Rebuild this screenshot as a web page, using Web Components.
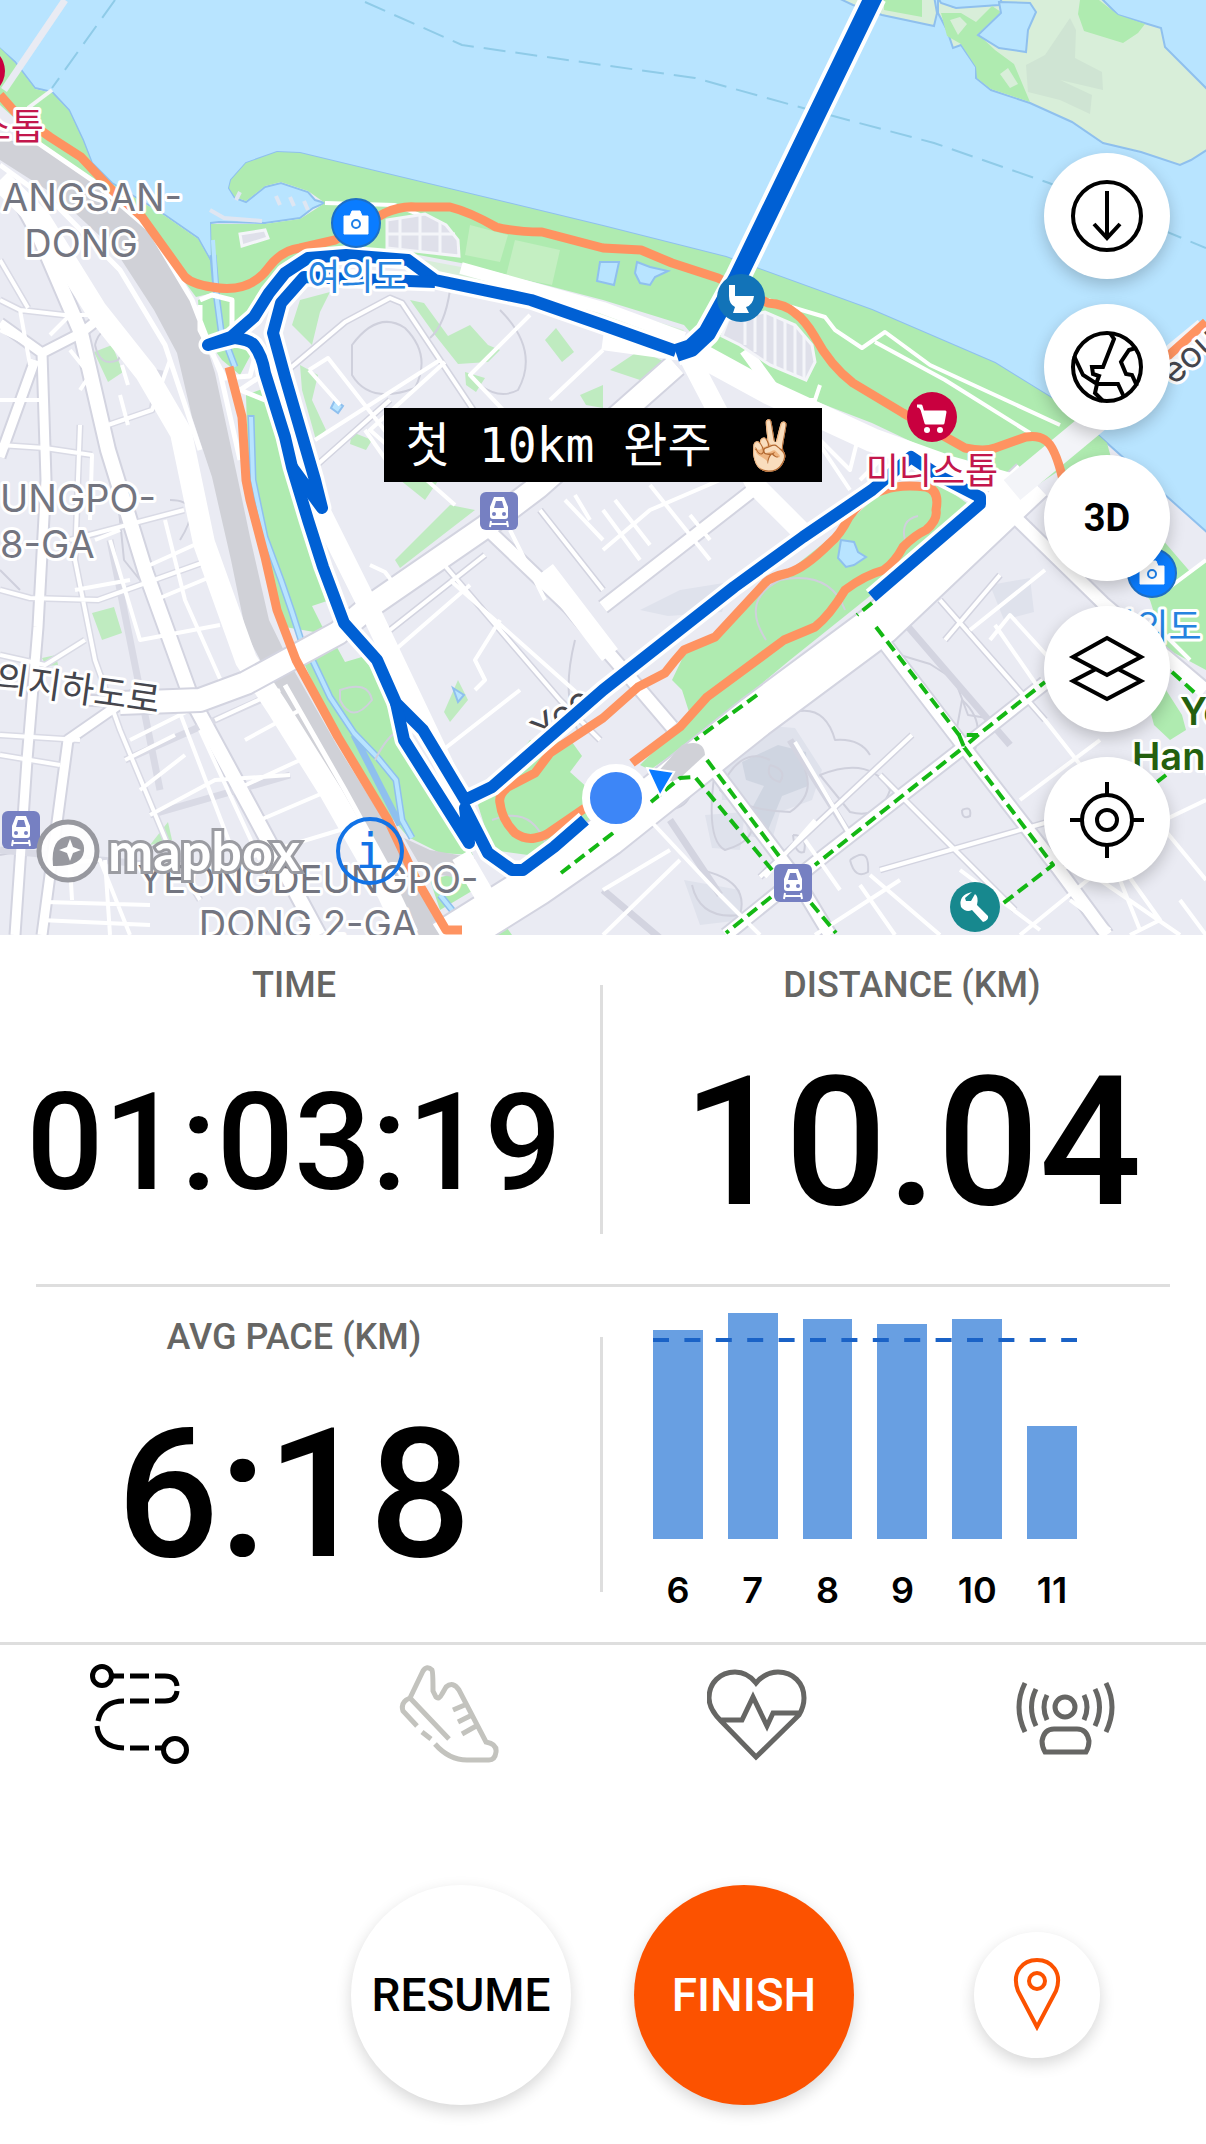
<!DOCTYPE html>
<html lang="en">
<head>
<meta charset="utf-8">
<meta name="viewport" content="width=device-width, initial-scale=1">
<title>Run</title>
<style>
  body {
    background: #ffffff;
    font-family: Roboto, "Noto Sans CJK KR", sans-serif;
    margin: 0;
  }
</style>
</head>
<body>

<run-screen>
  <run-map slot="map">
    <map-control label="Download map">
      <svg viewBox="-40 -40 80 80"><circle r="34"/><path d="M0-25V21M-13 8L0 22L13 8"/></svg>
    </map-control>
    <map-control label="Heatmaps">
      <svg viewBox="-40 -40 80 80"><circle r="34"/><path d="M3-34L7-28L-4 0H-15L-14 7L-8 9L-11 17M-33-11L-24 8L-10 17H11L17 30M-10 17L-12 26L-4 34M29-19L22-17L14-5L19 7L25 8L30 19"/></svg>
    </map-control>
    <map-control label="3D map">3D</map-control>
    <map-control label="Map layers">
      <svg viewBox="-40 -40 80 80"><path d="M0-31L34-12L0 6L-34-12ZM-11 0L-34 12L0 30L34 12L11 0"/></svg>
    </map-control>
    <map-control label="Centre on me">
      <svg viewBox="-40 -40 80 80"><circle r="25"/><circle r="10"/><path d="M0-38V-25M0 25V38M-37 0H-25M25 0H37"/></svg>
    </map-control>
  </run-map>

  <run-stat label="TIME" size="small">01:03:19</run-stat>
  <run-stat label="DISTANCE (KM)">10.04</run-stat>
  <run-stat slot="pace" label="AVG PACE (KM)">6:18</run-stat>
  <pace-chart slot="pace" splits="6:209,7:226,8:220,9:215,10:220,11:113"></pace-chart>

  <run-tabs slot="footer"></run-tabs>
  <run-actions slot="footer"></run-actions>
</run-screen>

<script>
class RunScreen extends HTMLElement {
  constructor() {
    super();

    const template = document.createElement( 'template' )
    template.innerHTML = /* template */ `
      <style>
        :host {
          display: flex;
          flex-direction: column;
        }

        .row {
          column-gap: 30px;
          display: grid;
          grid-template-columns: minmax( 0, 1fr ) minmax( 0, 1fr );
          position: relative;
        }

        .row::after {
          background: #dedede;
          bottom: 50px;
          content: '';
          left: 50%;
          margin-left: -3px;
          position: absolute;
          top: 50px;
          width: 3px;
        }

        hr {
          align-self: stretch;
          background: #dedede;
          border: none;
          height: 3px;
          margin: 0 36px;
        }
      </style>
      <slot name="map"></slot>
      <div class="row"><slot></slot></div>
      <hr>
      <div class="row"><slot name="pace"></slot></div>
      <slot name="footer"></slot>
    `;

    // Root
    this.attachShadow( {mode: 'open'} );
    this.shadowRoot.appendChild( template.content.cloneNode( true ) );
  }
}

class RunMap extends HTMLElement {
  constructor() {
    super();

    const template = document.createElement( 'template' )
    template.innerHTML = /* template */ `
      <style>
        :host {
          display: block;
          overflow: hidden;
          position: relative;
        }

        svg {
          display: block;
          height: auto;
          width: 100%;
        }

        .line {
          fill: none;
          stroke-linecap: butt;
          stroke-linejoin: round;
        }

        .water {
          fill: #b8e4ff;
          stroke: #8fc0ee;
          stroke-width: 2;
        }

        .park {
          fill: #afebb0;
        }

        .meadow {
          fill: #d8eed9;
        }

        .place {
          fill: #737580;
          font-family: Inter, sans-serif;
          font-size: 38px;
        }

        .name {
          font-family: "Noto Sans CJK KR", sans-serif;
          font-size: 36px;
        }

        .road {
          fill: #45464d;
          font-family: Inter, "Noto Sans CJK KR", sans-serif;
          font-size: 36px;
        }

        .halo text {
          paint-order: stroke;
          stroke: #ffffff;
          stroke-linejoin: round;
          stroke-width: 6px;
        }

        #caption {
          background: #000000;
          color: #ffffff;
          font-family: "DejaVu Sans Mono", "Noto Sans CJK KR", "Noto Color Emoji", monospace;
          font-size: 48px;
          left: 0;
          line-height: 74px;
          margin: 0 auto;
          padding: 0 22px;
          position: absolute;
          right: 0;
          top: 408px;
          white-space: pre;
          width: fit-content;
        }

        #controls {
          display: flex;
          flex-direction: column;
          gap: 25px;
          position: absolute;
          right: 36px;
          top: 153px;
        }

        #credit {
          align-items: center;
          bottom: 50px;
          display: flex;
          left: 36px;
          position: absolute;
        }

        #credit svg {
          height: 64px;
          width: 64px;
        }

        #credit a {
          color: #ffffff;
          font-family: Lato, sans-serif;
          font-size: 54px;
          font-weight: 700;
          line-height: 64px;
          margin: 0 36px 0 8px;
          paint-order: stroke;
          text-decoration: none;
          -webkit-text-stroke: 6px #9b9ca2;
        }

        #credit button {
          background: none;
          border: 4px solid #1273e6;
          border-radius: 50%;
          box-sizing: border-box;
          color: #1273e6;
          font-family: "DejaVu Sans Mono", monospace;
          font-size: 48px;
          height: 68px;
          line-height: 56px;
          padding: 0;
          width: 68px;
        }
      </style>
      <svg viewBox="0 0 1206 935" role="img" aria-label="Map of the run">
        <defs>
          <g id="camera">
            <circle r="24" fill="#0a7cff" stroke="#1e6fc4" stroke-width="2"/>
            <path d="M-12-7H-6L-4-12H4L6-7H12V11H-12Z" fill="#fff" stroke="#fff" stroke-linejoin="round"/>
            <circle cy="1" r="4" fill="none" stroke="#1e7fe8" stroke-width="2"/>
          </g>
          <g id="cart">
            <circle r="25" fill="#c9003f"/>
            <path d="M-15-11H-11L-6 6H11L13-5H-9" fill="#fff" stroke="#fff" stroke-width="3" stroke-linejoin="round"/>
            <circle cx="-5" cy="13" r="3" fill="#fff"/><circle cx="8" cy="13" r="3" fill="#fff"/>
          </g>
          <g id="train">
            <rect x="-19" y="-19" width="38" height="38" rx="6" fill="#7680c2"/>
            <path d="M-9 5V-4L-5-14H5L9-4V5Q9 8 6 8H-6Q-9 8-9 5Z" fill="#fff"/>
            <path d="M-5-3L-3-10H3L5-3Z" fill="#7680c2"/>
            <circle cx="-5" cy="3" r="2" fill="#7680c2"/><circle cx="5" cy="3" r="2" fill="#7680c2"/>
            <path d="M-8 10L-9 16M8 10L9 16M-9 13H9" fill="none" stroke="#fff" stroke-width="2"/>
          </g>
        </defs>

        <rect width="1206" height="935" fill="#eaebf3"/>

        <!-- Terrain -->
        <g fill="#dfe2ec">
          <path d="M720 772L760 725L795 728L822 770L812 800L780 812L772 840L748 836L742 800L722 800Z"/>
          <path fill="#cfd5e1" d="M742 762L778 745L806 752L808 786L782 796L768 830L750 812L764 786L746 780Z"/>
          <path d="M705 815L745 812L740 850L712 848ZM684 880L740 890L742 920L700 925ZM640 610L680 590L730 582L722 612L668 616ZM990 585L1030 578L1034 612L1004 620Z"/>
        </g>

        <!-- River -->
        <path class="water" d="M-4-4H1210V535L1107 443L1068 408L995 363L872 310L726 257L603 226L300 153L277 152L246 163L231 180L229 188L235 198L246 202L265 187L281 183L308 192L315 200L325 203L313 208L300 218L265 223L219 222L211 223L212 263L198 238L165 215L112 183L92 163L83 140L69 110L52 92L35 88L15 62L-4 45Z"/>
        <g class="line" stroke="#8fcbe8" stroke-width="2" stroke-dasharray="22 10">
          <path d="M115 0L52 88M365 2L462 45L603 65L695 78L803 108L934 143L1049 183L1206 248"/>
        </g>

        <!-- Island -->
        <g stroke="#8fc0ee" stroke-width="2">
          <path class="meadow" d="M834-4L853 5L882 15L934 26L937 13L934-4ZM938-4L953 7L1003-4H1099L1118 15L1161 28L1165 47L1210 92V148L1191 160L1180 165L1141 152L1103 143L1072 122L1030 103L991 90L976 78L976 67L961 45L953 48L947 30L938 13Z"/>
          <path class="water" d="M937-4L941 3L956 8L999 5L1003-4Z"/>
        </g>
        <path class="park" d="M884-2H922V17L884 10ZM1080 0H1099L1118 15L1145 24L1138 33L1123 43L1084 31L1078 14ZM941 13L961 13L976 22L992 6L1001 12L978 34L995 50L1014 64L1030 102L991 89L977 78L976 67L961 44L947 36Z"/>
        <path class="meadow" d="M950 20L960 17L967 24L958 35ZM1000 74L1008 68L1018 84L1010 88Z"/>
        <path fill="#cfe4d3" d="M1026 65L1045 55L1070 18L1076 30L1075 58L1102 72L1103 90L1060 80L1092 95L1090 114L1060 100L1028 92Z"/>
        <path class="water" d="M999 2L1030 3L1036 12L1028 30L1026 52L999 48L978 35L1001 13Z"/>

        <!-- Parks -->
        <g class="park">
          <path d="M0 48L15 63L35 89L52 93L69 111L83 141L92 164L112 184L165 216L198 239L212 264L217 292L196 297L146 230L92 180L46 147L0 105Z"/>
          <path d="M229 188L231 180L246 163L277 152L300 153L603 226L726 257L872 310L995 363L1068 408L1107 443L1120 490L1180 560L1206 590V655L1150 600L1086 520L1060 470L1030 490L950 460L872 423L768 383L703 347L684 325L603 300L461 263L408 253L331 247L292 260L269 287L246 320L256 345L240 375L222 360L200 330L198 300L216 294L212 262L211 224L265 224L300 219L325 203L308 191L281 182L265 186L246 201L235 197Z"/>
          <path d="M246 395L265 388L280 420L285 460L319 577L330 600L312 606L326 634L285 627L265 547L248 460Z"/>
          <path d="M300 655L333 640L345 662L362 657L374 672L400 727L423 760L473 855L440 853L408 837L385 810L346 753Z"/>
          <path d="M430 880L475 868L482 885L440 910ZM480 935L500 918L512 935Z"/>
          <path d="M478 805L530 740L572 742L582 756L570 772L590 790L604 806L590 838L550 858L492 850Z"/>
          <path d="M640 765L690 715L682 690L672 680L684 655L720 632L765 590L840 530L885 488L940 484L968 504L940 530L870 596L790 660L700 735L650 770Z"/>
          <path d="M1150 600L1206 560V670L1165 648ZM1150 710L1166 690L1182 715L1186 730L1170 740L1154 725Z"/>
        </g>
        <g fill="#bfebc0">
          <path d="M92 613L114 607L122 633L102 640ZM94 352L112 345L123 372L108 382ZM400 480L440 478L425 500ZM395 560L450 505L475 510L400 568ZM545 340L556 328L574 352L562 362ZM300 300L330 292L320 312L312 345L292 325ZM300 365L318 375L312 400L326 430L316 440L302 390ZM352 432L372 440L366 450L350 444ZM410 300L424 303L448 336L470 325L488 345L500 350L488 362L458 364L435 335ZM465 372L485 378L476 392L466 385ZM580 395L603 385V408L586 405ZM150 845L168 822L172 840ZM42 658L56 655L58 665L46 666ZM444 712L458 680L468 700L450 722ZM610 370L640 350L665 362L640 380Z"/>
        </g>
        <path d="M470 225L508 235L500 262L465 255ZM515 240L560 250L552 285L506 276Z" fill="#c4efc2"/>
        <path fill="#d8eed9" d="M330 250L408 257L461 267L603 305L684 330L678 340L603 322L531 298L440 275L330 256Z"/>

        <!-- Ponds and streams -->
        <path class="line" stroke="#8fc0ee" stroke-width="7" d="M213 255L217 300L221 330L235 367M251 415L253 480L265 537L281 580L292 612L301 640M311 657L330 697L354 733L378 758L396 780L402 820L412 838M354 735L400 825M440 895L456 915"/>
        <path class="line" stroke="#b8e4ff" stroke-width="4" d="M213 240L217 300L221 330L235 367M251 417L253 480L265 537L281 580L292 612L301 640M311 657L330 697L354 733L378 758L396 780L402 820L412 838M440 895L456 915"/>
        <path class="water" d="M600 262L619 262L614 285L597 281ZM637 262L650 267L668 271L655 277L650 285L640 283L635 273ZM335 400L343 406L338 413L331 408ZM841 540L854 542L858 552L866 557L854 565L846 567L838 558ZM453 688L464 695L458 702Z"/>

        <!-- Contours -->
        <g class="line" stroke="#cfd0dc" stroke-width="2">
          <path d="M95 345Q100 325 116 332Q128 345 118 360Q100 368 95 345M352 345Q378 310 405 328Q432 355 415 388Q370 405 352 375ZM450 290Q445 325 430 338M500 310Q540 350 518 390Q500 400 480 385M118 500L124 560L140 580M180 540Q205 500 170 500"/>
          <path d="M766 640Q740 600 780 580Q830 570 845 610M900 655L930 664L955 680L968 715L1000 720M905 540Q900 520 918 516M340 700Q352 725 372 700Q368 680 340 690ZM375 760Q400 710 425 740"/>
          <path d="M715 770Q705 840 725 850Q760 840 750 815M770 765Q788 770 780 782Q765 778 770 765M820 775Q870 755 890 790Q880 820 850 812ZM793 835Q808 835 804 852Q795 855 793 835M850 860Q870 845 868 872Q855 880 850 860M962 810Q972 805 970 816Q962 820 962 810M700 870Q750 880 740 915Q700 920 692 885M650 805Q690 820 694 780M600 845Q640 830 630 805M770 760Q740 745 720 790Q740 810 790 812Q815 795 805 770M575 640Q560 700 580 735M492 820Q530 805 545 842"/>
          <path d="M795 712Q825 705 835 740Q860 738 870 755M952 755L962 700Q985 720 975 750M20 200L38 240M0 855Q40 850 34 820M0 570L20 590"/>
        </g>

        <!-- Railway -->
        <path fill="#d0d1d7" d="M0 140L38 143L92 182L150 230L192 300L215 373L238 480L250 537L269 620L292 667L338 747L388 827L446 935H415L362 837L292 727L269 677L246 633L231 560L212 477L192 417L177 353L154 310L115 250L58 197L0 160Z"/>
        <path fill="#d0d1d7" d="M404 838L430 850L475 858L470 880L424 872Z"/>

        <!-- Road edges, then roads -->
        <g class="line" stroke="#d3d4e0">
          <path stroke-width="13" d="M0 323L42 353L81 333L104 315M35 360L0 457M42 353L46 480L38 627L27 760L15 935M154 703L80 700M140 690L68 740L52 860L42 935"/>
          <path stroke-width="18" d="M20 200L38 233L81 333L108 450L146 573L192 700L250 807L319 935"/>
        </g>
        <g class="line" stroke="#d9dae5" stroke-width="7">
          <path d="M0 300L20 310L64 315M28 308L0 260M80 425L75 560L95 660L120 730L170 850L200 900M0 590L30 598L98 600L210 560M0 655L45 665L85 640M0 735L80 740M108 425L152 410L160 370M0 445L45 448L92 455M70 540L184 510M0 755L60 765M110 540L160 790M125 760L260 700M150 815L290 775M0 850L100 860L210 870"/>
        </g>
        <g class="line" stroke="#ffffff" stroke-width="4">
          <path d="M0 300L20 310L64 315L104 315M28 308L0 260M20 310L30 365M80 425L75 560L95 660L120 730L170 850L200 900M0 590L30 598L98 600L210 560M0 655L45 665L85 640M0 735L80 740M108 425L152 410L170 360M0 445L45 448L92 455L90 520M70 540L184 510M0 755L60 765M110 540L140 640L220 625M125 760L175 735M130 740L200 705M140 790L185 755M150 815L215 780L290 775M40 865L100 860L130 935M165 520L185 600L225 690M120 395L128 425M128 385L122 365M20 340L0 330M50 335L70 315L60 290M70 350L90 375L80 390M0 400L40 400M45 902L150 905M40 920L150 925M105 860L110 935M70 865L72 900M150 565L205 540M155 600L215 575M95 540L120 530M245 740L300 710M235 790L300 760M260 820L330 790M175 700L240 870M200 730L260 860M240 860L340 830M215 720L280 690M75 590L130 580"/>
        </g>

        <g class="line" stroke="#ffffff">
          <path stroke-width="9" d="M0 323L42 353L81 333L104 315M35 360L0 457M154 703L80 700M140 690L68 740L52 860L42 935M42 353L46 480L38 627L27 760L15 935"/>
          <path stroke-width="14" d="M20 200L38 233L81 333L108 450L146 573L192 700L250 807L319 935"/>
          <path stroke-width="22" d="M0 180L40 220L96 310L146 373L181 433L204 543L246 660L277 707L331 793L388 893L408 935"/>
          <path stroke-width="5" d="M0 165L58 207L120 270L165 345L200 450M285 685L345 790L400 890M38 143L92 180L150 230L192 300L220 372L240 460M200 300L212 295L232 300L232 330M200 305L200 330L225 378L250 376L258 345M270 370L240 390L265 400"/>
        </g>

        <g class="line" stroke="#d3d4e0">
          <path stroke-width="26" d="M120 703L200 700L246 683L338 633L369 607L485 527L538 487L676 365"/>
          <path stroke-width="46" d="M1032 480L880 624L755 717L711 752L607 835L535 885L444 942"/>
          <path stroke-width="16" d="M603 607L757 487M485 527L569 607L626 673L672 727M707 760L795 877L830 935M872 627L961 743L1057 867L1107 935M1045 683L964 747L815 863L726 935M1018 520L1103 603L1206 690"/>
          <path stroke-width="7" d="M288 370L345 322L390 298L402 303L500 450M300 480L390 400M440 560L560 700L600 740M540 510L603 590M390 630L485 555M1000 575L945 640M940 600L1045 720M885 600L1010 745M790 740L850 835M760 877L912 735M880 775L1015 910M603 890L680 955M670 820L720 895M880 870L1055 820"/>
        </g>

        <g class="line" stroke="#ffffff" stroke-width="4">
          <path d="M288 370L345 322L390 298L402 303L500 450M309 370L328 358L400 450M309 370L340 405M315 440L440 360M445 362L370 430L455 505M530 315L470 375L560 470M550 400L603 350M300 480L390 400M370 565L385 572L400 592M365 430L400 480M450 580L585 700M390 630L485 555M385 630L395 650L470 585M440 560L560 700L600 740M540 510L603 590M565 500L603 540M475 690L485 680L475 660L500 620M430 760L520 690M425 740L450 760L455 800M510 530L545 600M575 495L590 520"/>
          <path d="M603 510L640 560M603 550L650 510L720 480M615 500L650 545M650 485L710 560M690 515L710 540M820 440L850 470L860 430M790 400L850 490M860 480L900 440"/>
          <path d="M940 600L1045 720L1100 790M970 630L1045 570M1000 575L945 640M995 625L1040 690M990 640L1010 615L1060 670M1020 800L1100 740M795 742L850 835M760 877L912 735M765 877L815 820M880 775L1015 910M805 840L840 890M880 870L1055 820M870 875L940 935M815 935L900 880M645 815L720 895L760 935M603 935L680 860M603 890L670 850M960 870L1040 930M1060 870L1206 800M1100 880L1180 935M1140 800L1206 880M1080 780L1140 930M1206 935L1180 900M1020 935L1100 870M895 935L860 885M1070 900L1110 930M1110 850L1160 920L1130 935M1100 600L1206 700"/>
          <path d="M768 300L825 317L835 330L862 348L885 332L930 365L1060 425M875 342L945 380L1030 433M325 203L395 205L420 215M1150 620L1190 660M1166 590L1206 560M820 385L815 400L790 400"/>
        </g>

        <g class="line" stroke="#ffffff">
          <path stroke-width="22" d="M120 703L200 700L246 683L338 633L369 607L485 527L538 487L676 365"/>
          <path stroke-width="42" d="M1032 480L880 624L755 717L711 752L607 835L535 885L444 942"/>
          <path stroke-width="24" d="M603 338L691 350L768 392L872 440L950 468L1010 485"/>
          <path stroke-width="12" d="M461 268L603 308L684 338M603 607L757 487M485 527L569 607L626 673L672 727M707 760L795 877L830 935M872 627L961 743L1057 867L1107 935M1045 683L964 747L815 863L726 935M1018 520L1103 603L1206 690M745 350L780 398"/>
          <path stroke-width="20" d="M688 355L757 487L810 540M545 570L610 655M461 855L490 905M320 510L370 610L470 820"/>
        </g>
        <path fill="#d0d1d7" d="M655 775L682 745Q704 738 705 755L680 778Q666 786 655 775Z"/>
        <path class="line" stroke="#f3f4f8" stroke-width="26" d="M1012 490L1094 422L1206 330"/>
        <path class="line" stroke="#e9ebf3" stroke-width="7" d="M65 0L4 90"/>
        <path class="line" stroke="#f3f4f8" stroke-width="4" d="M52 90L28 108"/>

        <!-- Parking lots and piers -->
        <g fill="#dfe0ea" stroke="#f4f5f9" stroke-width="3">
          <path d="M240 234L265 230L268 238L242 246ZM387 220L425 214L446 225L458 240L459 256L387 248Z"/>
          <path d="M728 320L765 312L795 325L812 345L815 362L806 380L770 365L740 345L722 336Z"/>
          <path d="M400 218V250M420 216V252M440 222V254M387 234H455M745 318V345M755 315V352M765 313V360M775 317V366M785 321V370M795 326V375M804 336V378"/>
        </g>
        <path class="line" stroke="#dfe6f2" stroke-width="4" d="M210 210L224 218L262 221M240 192L236 200M276 196L280 205M290 197L294 206M304 201L308 210"/>

        <!-- Foot and cycle paths -->
        <g class="line" stroke="#fe9361" stroke-width="9">
          <path d="M0 95L15 112L50 137L81 157L112 190L142 217L185 277Q192 284 212 287Q250 294 269 267Q282 250 300 248L335 240L385 213Q400 206 415 207L450 207Q470 212 496 227Q515 232 542 232L603 248L641 250L672 263L718 278L768 303Q785 304 795 313Q805 320 815 337Q830 365 853 383L903 413L965 448Q985 452 995 448L1026 437Q1038 435 1045 440Q1055 446 1063 480M1206 322L1150 372"/>
          <path d="M229 367L242 417L246 480L250 500L265 557L277 610L296 660L338 737L388 820L415 877L446 930L462 930"/>
          <path d="M632 763L680 727L707 697L784 640L815 627Q830 615 845 590Q865 575 884 570Q895 562 903 547Q915 535 926 530Q938 520 936 510Q940 490 926 487Q900 484 884 490Q865 495 849 517Q840 535 830 543Q805 568 788 573Q770 577 765 583L715 637L684 650Q675 660 665 673L638 687L603 718L550 753L535 773L508 787Q498 795 500 803Q502 820 515 833Q525 840 535 838Q545 836 550 832L585 808"/>
        </g>
        <g class="line" stroke="#14b814" stroke-width="4" stroke-dasharray="12 6">
          <path d="M872 603L857 615M876 627L959 735L978 735L1045 682M959 735L964 747L815 865M964 747L1053 865L1001 905M771 897L726 933M811 903L836 933M757 695L695 740M707 760L782 860M651 802L680 778L695 777L772 870M613 833L561 873M1172 672L1195 693M1166 775L1157 782M978 735L964 747"/>
        </g>

        <g class="halo">
          <text class="road" transform="translate( 544 744 ) rotate( -38 )">Yeo</text>
        </g>

        <!-- Route -->
        <g class="line" stroke="#ffffff">
          <path stroke-width="26" d="M874-4L738 277L707 333L691 348L676 353"/>
          <path stroke-width="19" d="M676 351L603 325L531 300L435 280L408 260L346 255L308 258L285 273L269 293L254 317L231 337L208 345L235 338Q250 340 254 345Q262 355 265 373L285 437L292 467L308 520L323 567L344 623L377 660L396 703L423 730L465 800L492 787L603 690L734 587L803 537L872 490L911 457L941 477L980 497L980 504L872 597"/>
          <path stroke-width="19" d="M435 282L408 281L304 277L281 303L273 333L285 377L315 480L322 508L292 467M396 703L404 740L469 843L465 808L488 853L512 870L523 870L554 847L585 820"/>
        </g>
        <g class="line" stroke="#0060d4">
          <path stroke-width="18" d="M874-4L738 277L707 333L691 348L676 353"/>
          <path stroke-width="12" d="M676 351L603 325L531 300L435 280L408 260L346 255L308 258L285 273L269 293L254 317L231 337L208 345L235 338Q250 340 254 345Q262 355 265 373L285 437L292 467L308 520L323 567L344 623L377 660L396 703L423 730L465 800L492 787L603 690L734 587L803 537L872 490L911 457L941 477L980 497L980 504L872 597"/>
          <path stroke-width="12" d="M435 282L408 281L304 277L281 303L273 333L285 377L315 480L322 508L292 467M396 703L404 740L469 843L465 808L488 853L512 870L523 870L554 847L585 820"/>
        </g>

        <!-- Labels -->
        <g class="halo">
          <text class="place" x="182" y="211" text-anchor="end">ANGSAN-</text>
          <text class="place" x="81" y="257" text-anchor="middle">DONG</text>
          <text class="place" x="0" y="512">UNGPO-</text>
          <text class="place" x="0" y="558">8-GA</text>
          <text class="place" x="308" y="893" text-anchor="middle">YEONGDEUNGPO-</text>
          <text class="place" x="308" y="938" text-anchor="middle">DONG 2-GA</text>
          <text class="road" transform="translate( -6 690 ) rotate( 8 )">의지하도로</text>
          <text class="road" transform="translate( 1174 386 ) rotate( -42 )">eou</text>
          <text class="name" x="357" y="290" text-anchor="middle" fill="#2583e0">여의도</text>
          <text class="name" x="1152" y="640" text-anchor="middle" fill="#2583e0">여의도</text>
          <text class="name" x="932" y="484" text-anchor="middle" fill="#c3174c">미니스톱</text>
          <text class="name" x="44" y="140" text-anchor="end" fill="#c3174c">스톱</text>
          <text class="place" x="1180" y="725" style="fill: #24600f; font-weight: 600;">Ye</text>
          <text class="place" x="1132" y="770" style="fill: #24600f; font-weight: 600;">Hang</text>
        </g>

        <!-- Points of interest -->
        <use href="#camera" x="356" y="223"/>
        <use href="#camera" x="1152" y="573"/>
        <use href="#cart" x="932" y="417"/>
        <use href="#cart" x="-20" y="71"/>
        <use href="#train" x="499" y="511"/>
        <use href="#train" x="21" y="830"/>
        <use href="#train" x="793" y="883"/>
        <g transform="translate( 741 298 )">
          <circle r="24" fill="#1273b8"/>
          <path d="M-12-13H-6V-2H13Q12 7 5 9L8 15H-8L-6 9Q-12 6-12-2Z" fill="#fff"/>
        </g>
        <g transform="translate( 975 907 )">
          <circle r="25" fill="#17888e"/>
          <path d="M-3-15Q-17-12-14 0Q-9 6-3 3L8 15Q14 13 13 9L2-2Q4-10 0-13L-4-6H-9L-10-9Z" fill="#fff"/>
        </g>

        <!-- Runner -->
        <path d="M647 768L674 772L660 796Z" fill="#0a7bff" stroke="#ffffff" stroke-width="2"/>
        <circle cx="616" cy="798" r="30" fill="#3d86f7" stroke="#ffffff" stroke-width="8"/>
      </svg>
      <div id="caption">첫 10km 완주 ✌🏻</div>
      <div id="controls"><slot></slot></div>
      <div id="credit">
        <svg viewBox="0 0 64 64" aria-hidden="true">
          <circle cx="32" cy="32" r="29" fill="#ffffff" fill-opacity=".9" stroke="#97989f" stroke-width="5"/>
          <path d="M17 47Q14 18 34 17Q49 18 48 32Q46 48 17 47Z" fill="#97989f"/>
          <path d="M34 20L37 28L45 31L37 34L34 42L31 34L23 31L31 28Z" fill="#ffffff"/>
        </svg>
        <a href="#mapbox">mapbox</a>
        <button type="button" aria-label="Map information">i</button>
      </div>
    `;

    // Root
    this.attachShadow( {mode: 'open'} );
    this.shadowRoot.appendChild( template.content.cloneNode( true ) );
  }
}

class MapControl extends HTMLElement {
  constructor() {
    super();

    const template = document.createElement( 'template' )
    template.innerHTML = /* template */ `
      <style>
        :host {
          display: block;
        }

        button {
          align-items: center;
          background: #ffffff;
          border: none;
          border-radius: 50%;
          box-shadow: 0 6px 16px rgba( 0, 0, 0, 0.20 );
          color: #000000;
          cursor: pointer;
          display: flex;
          font-family: Roboto, sans-serif;
          font-size: 38px;
          font-weight: 700;
          height: 126px;
          justify-content: center;
          padding: 0;
          width: 126px;
        }

        ::slotted( svg ) {
          fill: none;
          height: 80px;
          stroke: #000000;
          stroke-width: 4px;
          width: 80px;
        }
      </style>
      <button type="button"><slot></slot></button>
    `;

    // Root
    this.attachShadow( {mode: 'open'} );
    this.shadowRoot.appendChild( template.content.cloneNode( true ) );

    // Elements
    this.$button = this.shadowRoot.querySelector( 'button' );
  }

  // When things change
  _render() {
    this.$button.setAttribute( 'aria-label', this.label === null ? '' : this.label );
  }

  // Setup
  connectedCallback() {
    this._render();
  }

  // Watched attributes
  static get observedAttributes() {
    return ['label'];
  }

  attributeChangedCallback( name, old, value ) {
    this._render();
  }

  get label() {
    return this.getAttribute( 'label' );
  }
}

class RunStat extends HTMLElement {
  constructor() {
    super();

    const template = document.createElement( 'template' )
    template.innerHTML = /* template */ `
      <style>
        :host {
          align-items: center;
          box-sizing: border-box;
          display: flex;
          flex-direction: column;
          padding: 26px 0 8px 0;
        }

        p {
          color: #666664;
          font-size: 36px;
          font-weight: 500;
          line-height: 48px;
          margin: 0;
        }

        #value {
          color: #000000;
          font-size: 180px;
          line-height: 267px;
        }

        :host( [size=small] ) #value {
          font-size: 136px;
        }
      </style>
      <p id="label"></p>
      <p id="value"><slot></slot></p>
    `;

    // Root
    this.attachShadow( {mode: 'open'} );
    this.shadowRoot.appendChild( template.content.cloneNode( true ) );

    // Elements
    this.$label = this.shadowRoot.querySelector( '#label' );
  }

  // When things change
  _render() {
    this.$label.textContent = this.label === null ? '' : this.label;
  }

  // Setup
  connectedCallback() {
    this._render();
  }

  // Watched attributes
  static get observedAttributes() {
    return ['label', 'size'];
  }

  attributeChangedCallback( name, old, value ) {
    this._render();
  }

  get label() {
    return this.getAttribute( 'label' );
  }
}

class PaceChart extends HTMLElement {
  constructor() {
    super();

    const template = document.createElement( 'template' )
    template.innerHTML = /* template */ `
      <style>
        :host {
          box-sizing: border-box;
          display: block;
          padding: 26px 129px 28px 35px;
        }

        #chart {
          display: grid;
          gap: 25px;
          grid-auto-columns: minmax( 0, 1fr );
          grid-auto-flow: column;
          position: relative;
        }

        #chart div {
          align-items: center;
          display: flex;
          flex-direction: column;
          gap: 27px;
          justify-content: flex-end;
        }

        #chart i {
          align-self: stretch;
          background: #689fe2;
        }

        #chart span {
          color: #000000;
          font-family: Inter, sans-serif;
          font-size: 36px;
          font-weight: 600;
          line-height: 48px;
        }

        /* Average pace */
        svg {
          height: 4px;
          left: 0;
          position: absolute;
          top: 25px;
          width: 100%;
        }
      </style>
      <div id="chart">
        <svg aria-hidden="true"><line x1="0" y1="2" x2="100%" y2="2" stroke="#1a62c6" stroke-width="4" stroke-dasharray="16 15.4"/></svg>
      </div>
    `;

    // Root
    this.attachShadow( {mode: 'open'} );
    this.shadowRoot.appendChild( template.content.cloneNode( true ) );

    // Elements
    this.$chart = this.shadowRoot.querySelector( '#chart' );
    this.$average = this.shadowRoot.querySelector( 'svg' );
  }

  // When things change
  _render() {
    const columns = this.splits.map( ( [km, height] ) => {
      const column = document.createElement( 'div' );
      const bar = document.createElement( 'i' );
      const label = document.createElement( 'span' );
      bar.style.height = `${height}px`;
      label.textContent = km;
      column.append( bar, label );
      return column;
    } );

    this.$chart.replaceChildren( ...columns, this.$average );
  }

  // Setup
  connectedCallback() {
    this._render();
  }

  // Kilometre and bar height pairs
  get splits() {
    if( this.hasAttribute( 'splits' ) ) {
      return this.getAttribute( 'splits' ).split( ',' ).map( ( split ) => split.split( ':' ) );
    }

    return [];
  }
}

class RunTabs extends HTMLElement {
  constructor() {
    super();

    const template = document.createElement( 'template' )
    template.innerHTML = /* template */ `
      <style>
        :host {
          border-top: solid 3px #dedede;
          display: block;
        }

        nav {
          display: flex;
          justify-content: space-between;
          padding: 19px 90px 0 90px;
        }

        button {
          background: none;
          border: none;
          color: #666664;
          cursor: pointer;
          height: 100px;
          padding: 0;
          width: 100px;
        }

        button:nth-of-type( 1 ) {
          color: #000000;
        }

        button:nth-of-type( 2 ) {
          color: #c3c3be;
        }

        svg {
          display: block;
          fill: none;
          height: 100px;
          stroke: currentColor;
          stroke-width: 5px;
          width: 100px;
        }
      </style>
      <nav>
        <button type="button" aria-label="Route">
          <svg viewBox="0 0 100 100"><circle cx="12" cy="12" r="9.5"/><circle cx="85" cy="86" r="11.5"/><path d="M22 12H34M40 12H59M65 12H75Q86 12 87 22M87 27Q86 37 75 37H65M59 37H40M34 37Q12 37 8 57M7 62Q9 83 34 84M40 84H59M65 84H74"/></svg>
        </button>
        <button type="button" aria-label="Shoes">
          <svg viewBox="0 0 100 100"><path d="M11 34L24 7Q28 1 33 6Q34 8 34 27L37 33Q40 36 43 30L47 23Q54 17 60 26L87 78Q98 80 97 88Q96 96 90 96H68Q50 96 36 80M18 62L4 47Q1 38 11 34L50 75M23 68L32 75M68 40L54 46M73 51L59 58M79 61L63 70"/></svg>
        </button>
        <button type="button" aria-label="Heart rate">
          <svg viewBox="0 0 100 100"><path d="M49 19C42 10 35 8 28 8C13 8 2 19 2 34C2 43 7 50 14 57L49 93L92 51C95 46 97 40 97 34C97 19 86 8 71 8C62 8 55 12 49 19ZM14 56H35L46 33L60 62L66 49H93"/></svg>
        </button>
        <button type="button" aria-label="Beacon">
          <svg viewBox="0 0 100 100"><circle cx="49" cy="43" r="10"/><path d="M29 88Q26 83 26 77Q28 65 38 65H61Q71 65 73 77Q73 83 70 88ZM31 31Q25 43 31 56M20 25Q11 43 20 62M9 19Q-3 43 9 68M68 31Q74 43 68 56M79 25Q88 43 79 62M90 19Q102 43 90 68"/></svg>
        </button>
      </nav>
    `;

    // Root
    this.attachShadow( {mode: 'open'} );
    this.shadowRoot.appendChild( template.content.cloneNode( true ) );
  }
}

class RunActions extends HTMLElement {
  constructor() {
    super();

    const template = document.createElement( 'template' )
    template.innerHTML = /* template */ `
      <style>
        :host {
          align-items: center;
          display: flex;
          gap: 63px;
          justify-content: flex-end;
          padding: 121px 106px 38px 0;
        }

        button {
          align-items: center;
          background: #ffffff;
          border: none;
          border-radius: 50%;
          box-shadow: 0 6px 16px rgba( 0, 0, 0, 0.16 );
          color: #000000;
          cursor: pointer;
          display: flex;
          font-family: Roboto, sans-serif;
          font-size: 46px;
          font-weight: 500;
          height: 220px;
          justify-content: center;
          padding: 0;
          width: 220px;
        }

        #finish {
          background: #fc5200;
          color: #ffffff;
        }

        #pin {
          height: 126px;
          margin-left: 57px;
          width: 126px;
        }

        svg {
          fill: none;
          height: 76px;
          stroke: #fc5200;
          stroke-width: 4px;
          width: 48px;
        }
      </style>
      <button id="resume" type="button">RESUME</button>
      <button id="finish" type="button">FINISH</button>
      <button id="pin" type="button" aria-label="Mark location">
        <svg viewBox="0 0 48 76"><circle cx="24" cy="24" r="8"/><path d="M24 70L5 34C-2 15 10 3 24 3S50 15 43 34Z"/></svg>
      </button>
    `;

    // Root
    this.attachShadow( {mode: 'open'} );
    this.shadowRoot.appendChild( template.content.cloneNode( true ) );
  }
}

window.customElements.define( 'run-screen', RunScreen );
window.customElements.define( 'run-map', RunMap );
window.customElements.define( 'map-control', MapControl );
window.customElements.define( 'run-stat', RunStat );
window.customElements.define( 'pace-chart', PaceChart );
window.customElements.define( 'run-tabs', RunTabs );
window.customElements.define( 'run-actions', RunActions );
</script>
</body>
</html>
